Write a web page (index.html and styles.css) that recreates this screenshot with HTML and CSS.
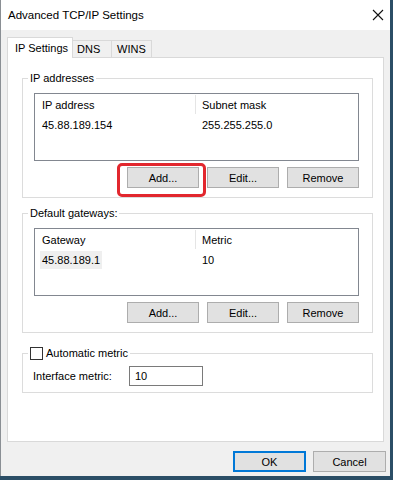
FILE: index.html
```html
<!DOCTYPE html>
<html lang="en">
<head>
  <meta charset="UTF-8" />
  <title>Advanced TCP/IP Settings</title>
  <link rel="stylesheet" href="styles.css">
</head>
<body>
  <div class="dialog">
    <div class="titlebar">
      <span class="title">Advanced TCP/IP Settings</span>
      <svg class="close" width="12" height="12" viewBox="0 0 12 12">
        <path d="M1 1L11 11M11 1L1 11" stroke="#111" stroke-width="1.1" fill="none"/>
      </svg>
    </div>

    <div class="tabs">
      <div class="tab tab-ip active">IP Settings</div>
      <div class="tab tab-dns">DNS</div>
      <div class="tab tab-wins">WINS</div>
    </div>

    <div class="panel">
      <div class="group">
        <div class="group-title">IP addresses</div>
        <div class="list">
          <div class="list-head">
            <div class="col">IP address</div>
            <div class="col col-2">Subnet mask</div>
          </div>
          <div class="list-row">
            <div class="col">45.88.189.154</div>
            <div class="col col-2">255.255.255.0</div>
          </div>
        </div>
        <div class="btn-row">
          <span class="mark"><button class="btn">Add...</button></span>
          <button class="btn">Edit...</button>
          <button class="btn">Remove</button>
        </div>
      </div>

      <div class="group group-gw">
        <div class="group-title">Default gateways:</div>
        <div class="list">
          <div class="list-head">
            <div class="col">Gateway</div>
            <div class="col col-2">Metric</div>
          </div>
          <div class="list-row">
            <div class="col"><span class="sel">45.88.189.1</span></div>
            <div class="col col-2">10</div>
          </div>
        </div>
        <div class="btn-row">
          <button class="btn">Add...</button>
          <button class="btn">Edit...</button>
          <button class="btn">Remove</button>
        </div>
      </div>

      <div class="group group-metric">
        <div class="group-title"><span class="checkbox"></span>Automatic metric</div>
        <div class="metric-row">
          <span class="metric-label">Interface metric:</span>
          <span class="input">10</span>
        </div>
      </div>
    </div>

    <div class="footer">
      <button class="btn btn-wide default">OK</button>
      <button class="btn btn-wide">Cancel</button>
    </div>
  </div>
</body>
</html>
```

FILE: styles.css
```css
* {
  box-sizing: border-box;
}

body {
  margin: 0;
  background: #2b4e66;
  font-family: "Liberation Sans", Arial, sans-serif;
  font-size: 11px;
  color: #000;
}

.dialog {
  width: 390px;
  height: 476px;
  background: #f0f0f0;
  border-left: 1px solid #8a8f94;
  display: flex;
  flex-direction: column;
}

.titlebar {
  height: 30px;
  background: #fff;
  display: flex;
  align-items: center;
  justify-content: space-between;
  padding: 0 6px 0 7px;
}

.title {
  font-size: 11.5px;
}

.tabs {
  display: flex;
  align-items: flex-end;
  height: 20px;
  margin-top: 7px;
  padding-left: 6px;
}

.tab {
  height: 17px;
  line-height: 16px;
  border: 1px solid #d9d9d9;
  border-bottom: none;
  background: #f0f0f0;
  margin-left: -1px;
}

.tab:first-child {
  margin-left: 0;
}

.tab.active {
  height: 21px;
  line-height: 20px;
  background: #fff;
  margin-bottom: -1px;
  position: relative;
  z-index: 1;
}

.tab-ip {
  width: 66px;
  padding-left: 7px;
}

.tab-dns {
  width: 40px;
  padding-left: 4px;
}

.tab-wins {
  width: 41px;
  padding-left: 5px;
}

.panel {
  margin: 0 6px 0 6px;
  height: 385px;
  background: #fff;
  border: 1px solid #d9d9d9;
  padding: 20px 10px 0 14px;
}

.group {
  border: 1px solid #dcdcdc;
  padding: 0 13px 9px 11px;
}

.group-gw {
  margin-top: 15px;
}

.group-metric {
  margin-top: 20px;
  padding-bottom: 6px;
}

.group-title {
  display: flex;
  align-items: center;
  width: fit-content;
  height: 14px;
  margin: -8px 0 0 -6px;
  padding: 0 2px;
  background: #fff;
}

.list {
  margin-top: 8px;
  height: 68px;
  border: 1px solid #828790;
  background: #fff;
}

.list-head {
  display: flex;
  height: 22px;
}

.list-head .col {
  display: flex;
  align-items: center;
}

.list-head .col-2 {
  border-left: 1px solid #e5e5e5;
  margin: 1px 0 2px;
}

.list-row {
  display: flex;
  height: 18px;
  align-items: center;
}

.col {
  width: 160px;
  padding-left: 7px;
}

.col-2 {
  width: auto;
  flex: 1;
  padding-left: 6px;
}

.sel {
  background: #efefef;
  padding: 3px 2px;
  margin-left: -2px;
}

.list-row .col-2 {
  padding-left: 7px;
}

.btn-row {
  display: flex;
  justify-content: flex-end;
  gap: 8px;
  margin-top: 6px;
}

.btn {
  width: 72px;
  height: 21px;
  padding: 0;
  border: 1px solid #adadad;
  background: #e1e1e1;
  font: inherit;
  color: #000;
}

.btn-wide {
  width: 73px;
}

.btn.default {
  border-color: #0078d7;
  box-shadow: inset 0 0 0 1px #0078d7;
}

.mark {
  position: relative;
  display: flex;
}

.mark::after {
  content: "";
  position: absolute;
  left: -10px;
  right: -7px;
  top: -4px;
  bottom: -9px;
  border: 3px solid #e2272e;
  border-radius: 5px;
}

.checkbox {
  width: 13px;
  height: 13px;
  border: 1px solid #333;
  background: #fff;
  margin-right: 3px;
}

.metric-row {
  display: flex;
  align-items: center;
  margin-top: 6px;
  margin-left: -1px;
}

.metric-label {
  width: 96px;
}

.input {
  width: 74px;
  height: 20px;
  line-height: 18px;
  border: 1px solid #7a7a7a;
  padding-left: 5px;
}

.footer {
  display: flex;
  justify-content: flex-end;
  gap: 7px;
  padding: 9px 4px 0 0;
}
```
